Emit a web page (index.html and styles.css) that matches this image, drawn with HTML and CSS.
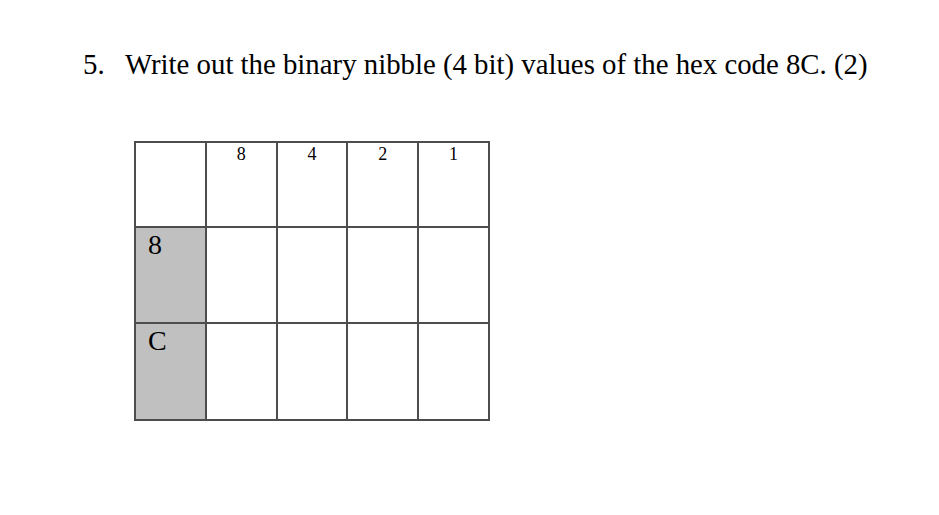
FILE: index.html
```html
<!DOCTYPE html>
<html>
<head>
<meta charset="utf-8">
<link rel="stylesheet" href="styles.css">
</head>
<body>
<div class="page">
  <div class="question">
    <span class="num">5.</span>
    <span class="text">Write out the binary nibble (4 bit) values of the hex code 8C. (2)</span>
  </div>
  <div class="grid">
    <div class="cell corner"></div>
    <div class="cell head">8</div>
    <div class="cell head">4</div>
    <div class="cell head">2</div>
    <div class="cell head">1</div>
    <div class="cell label">8</div>
    <div class="cell"></div>
    <div class="cell"></div>
    <div class="cell"></div>
    <div class="cell"></div>
    <div class="cell label">C</div>
    <div class="cell"></div>
    <div class="cell"></div>
    <div class="cell"></div>
    <div class="cell"></div>
  </div>
</div>
</body>
</html>
```

FILE: styles.css
```css
html, body {
  margin: 0;
  padding: 0;
  background: #fff;
}
.page {
  padding: 49px 0 0 83px;
  font-family: "Liberation Serif", "Times New Roman", serif;
  color: #000;
}
.question {
  display: flex;
  font-size: 28.8px;
  line-height: 31px;
}
.num {
  width: 42px;
  flex: none;
}
.grid {
  margin-top: 61px;
  margin-left: 51px;
  width: 356px;
  display: grid;
  grid-template-columns: repeat(5, 1fr);
  grid-template-rows: 83px 94px 95px;
  gap: 2px;
  padding: 2px;
  box-sizing: border-box;
  background: #4d4d4d;
}
.cell {
  background: #fff;
}
.head {
  text-align: center;
  font-size: 18px;
  line-height: 20px;
  padding-top: 1px;
}
.label {
  background: #c0c0c0;
  font-size: 28px;
  line-height: 26px;
  padding-left: 12px;
  padding-top: 4px;
}
```
